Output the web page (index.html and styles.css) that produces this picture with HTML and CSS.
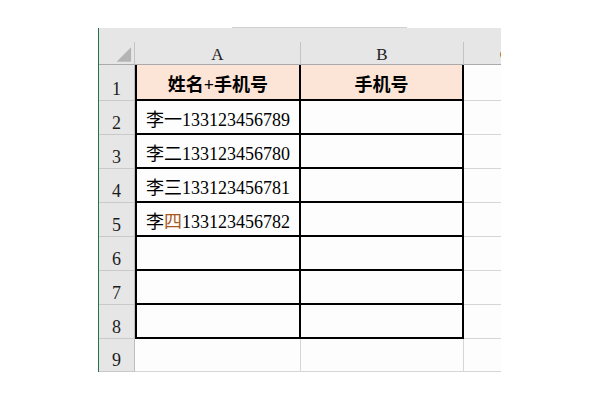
FILE: index.html
```html
<!DOCTYPE html>
<html lang="zh">
<head>
<meta charset="utf-8">
<link rel="stylesheet" href="styles.css">
</head>
<body>
<div class="sheet">
  <div class="top-edge"><span class="seg"></span></div>
  <div class="band"></div>
  <div class="grid">
    <div class="corner"><svg width="36" height="22" viewBox="0 0 36 22"><polygon points="18,20 33,20 33,5" fill="#b4b4b4"/></svg></div>
    <div class="colhead">A</div>
    <div class="colhead">B</div>
    <div class="colhead cc">C</div>

    <div class="rn">1</div>
    <div class="cell a box hdr">姓名+手机号</div>
    <div class="cell b box hdr">手机号</div>
    <div class="cell c"></div>

    <div class="rn">2</div>
    <div class="cell a box">李一133123456789</div>
    <div class="cell b box"></div>
    <div class="cell c"></div>

    <div class="rn">3</div>
    <div class="cell a box">李二133123456780</div>
    <div class="cell b box"></div>
    <div class="cell c"></div>

    <div class="rn">4</div>
    <div class="cell a box">李三133123456781</div>
    <div class="cell b box"></div>
    <div class="cell c"></div>

    <div class="rn">5</div>
    <div class="cell a box">李<span class="tint">四</span>133123456782</div>
    <div class="cell b box"></div>
    <div class="cell c"></div>

    <div class="rn">6</div>
    <div class="cell a box"></div>
    <div class="cell b box"></div>
    <div class="cell c"></div>

    <div class="rn">7</div>
    <div class="cell a box"></div>
    <div class="cell b box"></div>
    <div class="cell c"></div>

    <div class="rn">8</div>
    <div class="cell a box"></div>
    <div class="cell b box"></div>
    <div class="cell c"></div>

    <div class="rn">9</div>
    <div class="cell a plain"></div>
    <div class="cell b plain"></div>
    <div class="cell c"></div>
  </div>
</div>
</body>
</html>
```

FILE: styles.css
```css
html, body {
  margin: 0;
  padding: 0;
  background: #ffffff;
}

body {
  width: 600px;
  height: 400px;
  overflow: hidden;
  font-family: "Liberation Serif", "Noto Sans CJK SC", serif;
  color: #000;
}

.sheet {
  margin-left: 98px;
  margin-top: 27px;
  width: 403px;
  overflow: hidden;
  display: flex;
  flex-direction: column;
}

.top-edge {
  height: 1px;
  display: flex;
}

.top-edge .seg {
  margin-left: 134px;
  width: 175px;
  height: 1px;
  background: #d2d2d2;
}

.band {
  height: 14px;
  background: #e6e6e6;
  border-left: 1px solid #217346;
}

.grid {
  display: grid;
  grid-template-columns: 36px 166px 163px 83px;
  grid-template-rows: 23px 36px repeat(7, 34px) 33px;
  border-left: 1px solid #217346;
}

.grid > div {
  box-sizing: border-box;
  display: flex;
  align-items: flex-end;
  justify-content: center;
  min-width: 0;
}

.corner {
  background: #e6e6e6;
  border-right: 1px solid #c4c4c4;
  border-bottom: 1px solid #ababab;
}

.corner svg {
  display: block;
  align-self: flex-start;
}

.colhead {
  background: #e6e6e6;
  border-right: 1px solid #c4c4c4;
  border-bottom: 1px solid #ababab;
  font-size: 17px;
  line-height: 17px;
  padding-bottom: 1px;
  color: #222;
}

.colhead.cc {
  border-right: none;
}

.rn {
  background: #e6e6e6;
  border-right: 1px solid #bdbdbd;
  border-bottom: 1px solid #c9c9c9;
  font-size: 18px;
  line-height: 18px;
  padding-bottom: 2px;
  color: #1c1c1c;
}

.cell {
  background: #fcfdfc;
  font-size: 18px;
  line-height: 18px;
  padding-bottom: 4px;
  white-space: nowrap;
}

.cell.box {
  border-right: 2px solid #000;
  border-bottom: 2px solid #000;
}

.cell.a.box {
  border-left: 2px solid #000;
}

.cell.hdr {
  background: #fce4d6;
  font-weight: 700;
  padding-bottom: 5px;
}

.cell.plain {
  border-right: 1px solid #d6d6d6;
  border-bottom: 1px solid #d6d6d6;
}

.cell.c {
  border-bottom: 1px solid #d6d6d6;
}

.tint {
  color: #a8581c;
}
```
